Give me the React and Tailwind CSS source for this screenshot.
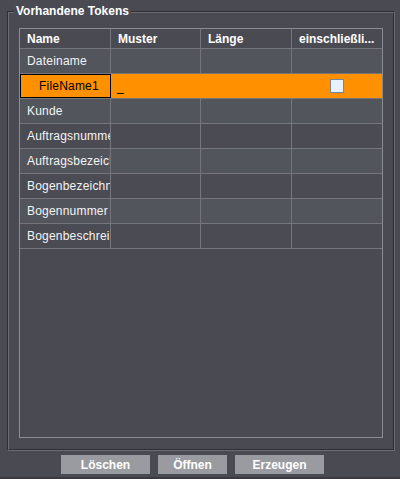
import React from "react";

const rows = [
  "Dateiname",
  "FileName1",
  "Kunde",
  "Auftragsnummer",
  "Auftragsbezeichnung",
  "Bogenbezeichnung",
  "Bogennummer",
  "Bogenbeschreibung",
];

function Row({ name, index }) {
  if (index === 1) {
    return (
      <div className="flex h-[25px] border-b border-[#75767c] bg-[#ff9000] text-black tracking-[0.2px]">
        <div className="w-[91px] h-full border border-black flex items-center pl-[18px] overflow-hidden whitespace-nowrap">
          {name}
        </div>
        <div className="w-[90px] h-full border-r border-[#ff9000] flex items-center pl-[6px] pt-[2px]">_</div>
        <div className="w-[91px] h-full border-r border-[#ff9000]"></div>
        <div className="w-[90px] h-full flex items-center justify-center">
          <div className="w-[14px] h-[14px] bg-[#e8f0f8] border border-[#77879a]"></div>
        </div>
      </div>
    );
  }
  const bg = index % 2 === 0 ? "bg-[#53555d]" : "bg-[#4a4b53]";
  return (
    <div className={`flex h-[25px] border-b border-[#75767c] ${bg} text-[#f4f4f4] tracking-[0.2px]`}>
      <div className="w-[91px] h-full border-r border-[#75767c] flex items-center pl-[7px] overflow-hidden whitespace-nowrap">
        {name}
      </div>
      <div className="w-[90px] h-full border-r border-[#75767c]"></div>
      <div className="w-[91px] h-full border-r border-[#75767c]"></div>
      <div className="w-[90px] h-full"></div>
    </div>
  );
}

export default function App() {
  return (
    <div className="w-[400px] h-[479px] bg-[#4a4a52] flex flex-col font-['Liberation_Sans',Arial,sans-serif] text-[12px] overflow-hidden">
      <div className="ml-[7px] mt-[11px] w-[388px] h-[440px] border border-t-[#2e2e34] border-l-[#2e2e34] border-r-[#6c6c74] border-b-[#6c6c74]">
        <div className="relative w-full h-full border border-t-[#6c6c74] border-l-[#6c6c74] border-r-[#2e2e34] border-b-[#2e2e34] pl-[10px] pt-[15px]">
          <div className="absolute top-[-9px] left-[5px] px-[2px] bg-[#4a4a52] text-white font-bold leading-[14px]">
            Vorhandene Tokens
          </div>
          <div className="w-[364px] h-[410px] border border-[#8c8d92] bg-[#4a4a52] overflow-hidden">
            <div className="flex h-[20px] border-b border-[#75767c] text-white font-bold">
              <div className="w-[91px] h-full border-r border-[#75767c] flex items-center pl-[7px]">Name</div>
              <div className="w-[90px] h-full border-r border-[#75767c] flex items-center pl-[7px]">Muster</div>
              <div className="w-[91px] h-full border-r border-[#75767c] flex items-center pl-[7px]">Länge</div>
              <div className="w-[90px] h-full flex items-center pl-[7px] whitespace-nowrap overflow-hidden">einschließli...</div>
            </div>
            {rows.map((r, i) => (
              <Row key={r} name={r} index={i} />
            ))}
          </div>
        </div>
      </div>
      <div className="flex mt-[4px] ml-[61px] gap-[8px]">
        <button className="w-[89px] h-[19px] bg-[#9a9ba0] text-white font-bold flex items-center justify-center">Löschen</button>
        <button className="w-[69px] h-[19px] bg-[#9a9ba0] text-white font-bold flex items-center justify-center">Öffnen</button>
        <button className="w-[89px] h-[19px] bg-[#9a9ba0] text-white font-bold flex items-center justify-center">Erzeugen</button>
      </div>
      <div className="flex-1"></div>
      <div className="h-[2px] bg-[#3a3a40]"></div>
    </div>
  );
}
